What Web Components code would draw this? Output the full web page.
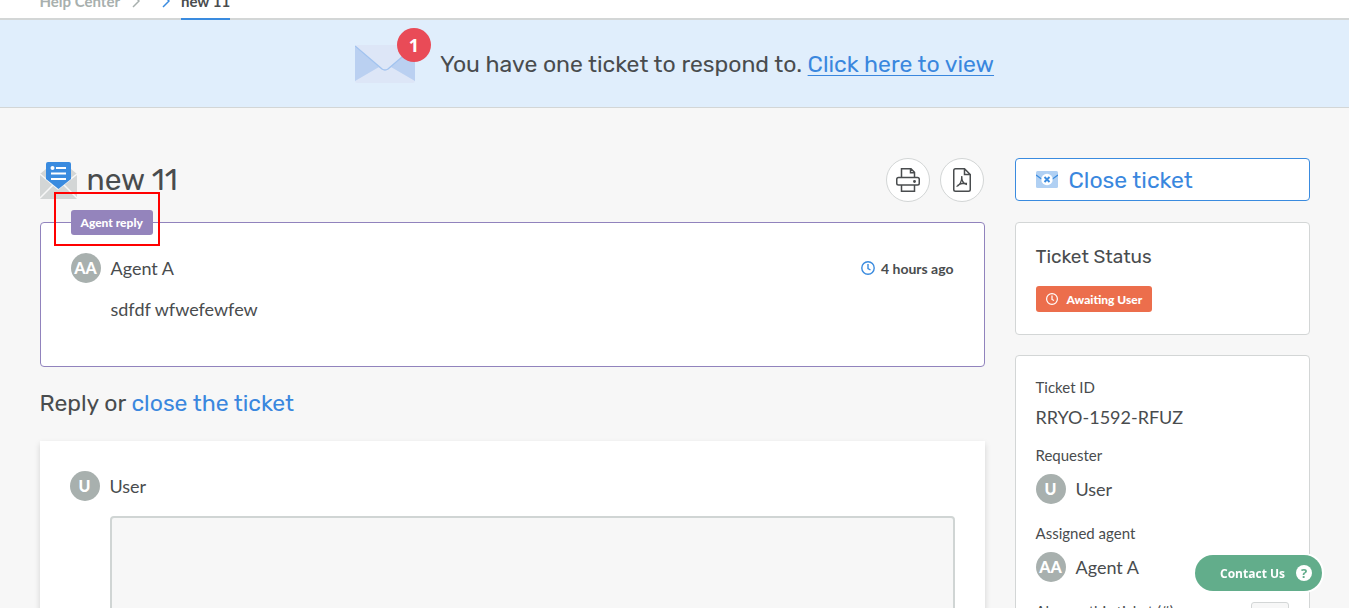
<!DOCTYPE html>
<html lang="en">
<head>
<meta charset="utf-8">
<title>new 11</title>
<style>
html,body{margin:0;height:100%}
body{background:#f7f7f7;color:#494c4e;font-family:Lato,"Liberation Sans",sans-serif;overflow:hidden}
</style>
</head>
<body>
<help-app></help-app>
<script>
const define = (name, html) => {
  const t = document.createElement('template');
  t.innerHTML = html;
  customElements.define(name, class extends HTMLElement {
    constructor() {
      super();
      this.attachShadow({ mode: 'open' }).append(t.content.cloneNode(true));
    }
  });
};

define('bread-crumbs', `
<style>
:host{display:flex;flex-direction:column;justify-content:flex-end;height:20px;overflow:hidden;background:#fff;box-shadow:inset 0 -2px #d3d6d6}
nav{display:flex;align-items:center;max-width:1270px;width:calc(100% - 79px);margin:0 auto;height:38px;flex:none;font-size:15px;font-weight:700;line-height:38px}
a{color:#a8b0ae;text-decoration:none}
a.here{color:#494c4e;box-shadow:inset 0 -2px #3a8bdf}
svg{width:8px;height:14px;margin:0 10px 0 12px;fill:none;stroke:#a8b0ae;stroke-width:1.5}
svg.on{stroke:#3a8bdf;margin:0 11px 0 12px}
</style>
<nav aria-label="Breadcrumb"><a href="#">Help Center</a>
<svg viewBox="0 0 8 14"><path d="M1 1l6 6-6 6"/></svg>
<svg class="on" viewBox="0 0 8 14"><path d="M1 1l6 6-6 6"/></svg>
<a class="here" href="#">new 11</a></nav>`);

define('ticket-notice', `
<style>
:host{display:flex;align-items:center;justify-content:center;gap:25px;height:87px;background:#e0eefc;border-bottom:1px solid #d3d6d6;font:400 23px/28px Rubik,Inter,sans-serif}
.icon{position:relative;display:block;width:60px;height:38px}
svg{display:block;width:60px;height:38px}
b{position:absolute;left:42px;top:-17px;width:34px;height:34px;border-radius:50%;background:#e94b57;color:#fff;font:700 18px/35px "Open Sans",sans-serif;text-align:center}
a{color:#3a87de;text-underline-offset:3px;text-decoration-thickness:1px;text-decoration-skip-ink:none}
</style>
<span class="icon"><svg viewBox="0 0 60 38"><rect width="60" height="38" rx="2" fill="#dde6f7"/><path d="M0 2l24 20L0 36zM60 2L36 22l24 14z" fill="#bad0f1"/><path d="M0 1l27 23q3 2 6 0L60 1" fill="#dde6f7" stroke="#a2c3ef" stroke-width="1.5"/></svg><b>1</b></span>
<span>You have one ticket to respond to. <a href="#">Click here to view</a></span>`);

define('user-avatar', `
<style>
:host{display:flex;align-items:center;gap:10px;font-size:18px;line-height:30px}
.disc{width:30px;height:30px;border-radius:50%;background:#a8b0ae;color:#fff;font-weight:900;font-size:16px;text-align:center}
</style>
<span class="disc"><slot name="initials"></slot></span><span><slot></slot></span>`);

define('round-button', `
<style>
:host{display:block}
button{display:flex;align-items:center;justify-content:center;width:44px;height:44px;padding:0;border:1px solid #d3d6d6;border-radius:50%;background:#fff}
</style>
<button type="button"><slot></slot></button>`);

define('ticket-title', `
<style>
:host{display:flex;align-items:center;gap:10px;height:44px;padding-right:1px}
h1{flex:1;margin:0;font:400 30px/44px Rubik,Inter,sans-serif}
.mail{width:37px;height:38px}
svg{display:block}
</style>
<svg class="mail" viewBox="0 0 37 38"><path d="M0 13l6-5h25l6 5v24q0 1-1 1H1q-1 0-1-1z" fill="#d3d6d6"/><path d="M0 13l18 15 19-15M0 37l13-13M37 37L24 24" fill="none" stroke="#f7f7f7" stroke-width="1.5"/><path d="M6 3q0-2 2-2h21q2 0 2 2v15L18.500 28 6 18z" fill="#3a8bdf"/><path d="M16 7h10M11 12.500h15M11 18h15" stroke="#fff" stroke-width="2"/><circle cx="12.500" cy="7" r="2" fill="#fff"/></svg>
<h1>new 11</h1>
<round-button><svg role="img" aria-label="Print" width="24" height="24" viewBox="0 0 24 24" fill="none" stroke="#494c4e" stroke-width="1.500"><path d="M5.500 9.500V.75h9.500l3.500 3.500v5.250M14.500.75v4h4M5.500 17H2.500q-1.750 0-1.750-1.750v-4Q.75 9.500 2.500 9.500h19q1.750 0 1.750 1.750v4Q23.250 17 21.500 17h-3M5.500 17v6.250h13V17M5.500 17h13"/><circle cx="18.500" cy="13.500" r=".7" fill="#494c4e"/></svg></round-button>
<round-button><svg role="img" aria-label="Save as PDF" width="18" height="24" viewBox="0 0 18 24" fill="none" stroke="#494c4e" stroke-width="1.500"><path d="M2.500.75h9l5.750 5.750v15q0 1.750-1.750 1.750h-13Q.75 23.250.75 21.500v-19Q.75.75 2.500.75zM11.500.75V6.500h5.750"/><path d="M3.500 18.500c3-1 5.500-5 5.300-10.500-.3 5 2 8 5.200 8.500M4.500 17.500c2.500-1.800 6-2.700 9.500-2" stroke-width="1.300"/></svg></round-button>`);

define('ticket-message', `
<style>
:host{display:block;position:relative;box-sizing:border-box;height:145px;padding:30px;border:1px solid #9183bd;border-radius:4px;background:#fff}
.tag{position:absolute;left:30px;top:-13px;padding:0 10px;border-radius:3px;background:#9484bc;color:#fff;font-size:12px;font-weight:900;line-height:25px}
.mark{position:absolute;left:13px;top:-31px;width:102px;height:50px;border:2px solid #f00}
header{display:flex;justify-content:space-between;align-items:center}
time{display:flex;align-items:center;gap:6px;font-size:14px;font-weight:700}
p{margin:11px 0 0 40px;font-size:18px;line-height:30px}
</style>
<span class="tag">Agent reply</span><span class="mark"></span>
<header><user-avatar><span slot="initials">AA</span>Agent A</user-avatar>
<time><svg width="14" height="14" viewBox="0 0 14 14" fill="none" stroke="#3a8bdf" stroke-width="1.400"><circle cx="7" cy="7" r="6.200"/><path d="M7 3v4.500l2.500 1.500"/></svg>4 hours ago</time></header>
<p>sdfdf wfwefewfew</p>`);

define('reply-form', `
<style>
:host{display:block}
h2{margin:20px 0 22px;font:400 23px/32px Rubik,Inter,sans-serif}
a{color:#3a87de;text-decoration:none}
form{padding:30px;background:#fff;box-shadow:0 3px 6px rgba(0,0,0,.15)}
textarea{display:block;box-sizing:border-box;width:calc(100% - 40px);height:200px;margin:15px 0 0 40px;border:2px solid #d0d5d4;border-radius:4px;background:#f7f7f7;resize:none}
</style>
<h2>Reply or <a href="#">close the ticket</a></h2>
<form><user-avatar><span slot="initials">U</span>User</user-avatar><textarea aria-label="Reply"></textarea></form>`);

define('close-ticket', `
<style>
:host{display:block;padding-bottom:1px}
button{display:flex;align-items:center;gap:11px;width:100%;height:43px;padding:0 20px;border:1px solid #3a8bdf;border-radius:4px;background:#fff;color:#3a87de;font:400 23px/28px Rubik,Inter,sans-serif}
</style>
<button type="button"><svg width="22" height="17" viewBox="0 0 22 17"><rect width="22" height="17" rx="1.500" fill="#b0d0f3"/><path d="M0 4l11 8L22 4" fill="none" stroke="#3a8bdf" stroke-width="1.300"/><circle cx="11" cy="8.500" r="5.700" fill="#fff"/><path d="M8.500 6l5 5m0-5l-5 5" stroke="#3a8bdf" stroke-width="1.900"/></svg>Close ticket</button>`);

define('side-card', `
<style>
:host{display:block;padding:20px;border:1px solid #d3d6d6;border-radius:4px;background:#fff}
</style><slot></slot>`);

define('ticket-status', `
<style>
:host{display:block;height:71px}
h3{margin:0 0 15px;font:400 19px/28px Rubik,Inter,sans-serif}
span{display:inline-flex;align-items:center;gap:9px;height:26px;padding:0 10px;border-radius:3px;background:#ec6e4c;color:#fff;font-size:12px;font-weight:900}
</style>
<h3>Ticket Status</h3>
<span><svg width="12" height="12" viewBox="0 0 12 12" fill="none" stroke="#fff" stroke-width="1.200"><circle cx="6" cy="6" r="5.400"/><path d="M6 2.500v4l2 1"/></svg>Awaiting User</span>`);

define('ticket-facts', `
<style>
:host{display:block;height:280px}
dl{margin:0}
dt{margin:0 0 8px;font-size:15px;line-height:22px}
dd{margin:0 0 16px;font-size:18px;line-height:22px}
dd.person{margin-bottom:18px}
.also{display:flex;justify-content:space-between}
button{width:38px;height:26px;margin:2px 0 0;border:1px solid #d3d6d6;border-radius:3px;background:#f7f7f7}
</style>
<dl><dt>Ticket ID</dt><dd>RRYO-1592-RFUZ</dd>
<dt>Requester</dt><dd class="person"><user-avatar><span slot="initials">U</span>User</user-avatar></dd>
<dt>Assigned agent</dt><dd class="person"><user-avatar><span slot="initials">AA</span>Agent A</user-avatar></dd>
<dt class="also">Also on this ticket (#)<button type="button" aria-label="Add"></button></dt></dl>`);

define('contact-us', `
<style>
:host{position:fixed;right:27px;bottom:17px}
button{display:flex;align-items:center;gap:11px;height:36px;padding:0 10px 0 25px;border:0;border-radius:18px;background:#62ad8b;box-shadow:0 0 0 2px #fff;color:#fff;font:700 12px "Open Sans",sans-serif}
i{width:16px;height:16px;border-radius:50%;background:#fff;color:#62ad8b;font-style:normal;font-size:13px;line-height:16px;text-align:center}
</style>
<button type="button">Contact Us<i>?</i></button>`);

define('help-app', `
<style>
:host{display:block}
main{display:grid;grid-template-columns:minmax(0,1fr) 295px;gap:30px;max-width:1270px;width:calc(100% - 79px);margin:0 auto;padding-top:50px}
section,aside{display:flex;flex-direction:column;gap:20px}
</style>
<bread-crumbs></bread-crumbs><ticket-notice></ticket-notice>
<main><section><ticket-title></ticket-title><div><ticket-message></ticket-message><reply-form></reply-form></div></section>
<aside><close-ticket></close-ticket><side-card><ticket-status></ticket-status></side-card><side-card><ticket-facts></ticket-facts></side-card></aside></main>
<contact-us></contact-us>`);
</script>
</body>
</html>
